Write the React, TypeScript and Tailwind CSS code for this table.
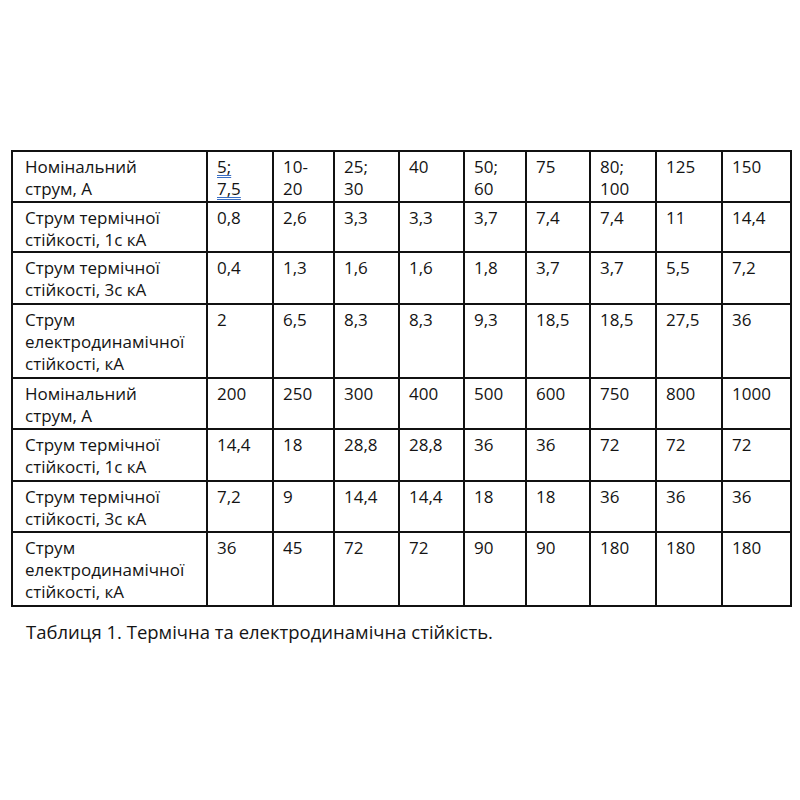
import React from 'react';

type Row = { label: string[]; values: string[][] };

const rows: Row[] = [
  { label: ['Номінальний', 'струм, А'], values: [['5;', '7,5'], ['10-', '20'], ['25;', '30'], ['40'], ['50;', '60'], ['75'], ['80;', '100'], ['125'], ['150']] },
  { label: ['Струм термічної', 'стійкості, 1с кА'], values: [['0,8'], ['2,6'], ['3,3'], ['3,3'], ['3,7'], ['7,4'], ['7,4'], ['11'], ['14,4']] },
  { label: ['Струм термічної', 'стійкості, 3с кА'], values: [['0,4'], ['1,3'], ['1,6'], ['1,6'], ['1,8'], ['3,7'], ['3,7'], ['5,5'], ['7,2']] },
  { label: ['Струм', 'електродинамічної', 'стійкості, кА'], values: [['2'], ['6,5'], ['8,3'], ['8,3'], ['9,3'], ['18,5'], ['18,5'], ['27,5'], ['36']] },
  { label: ['Номінальний', 'струм, А'], values: [['200'], ['250'], ['300'], ['400'], ['500'], ['600'], ['750'], ['800'], ['1000']] },
  { label: ['Струм термічної', 'стійкості, 1с кА'], values: [['14,4'], ['18'], ['28,8'], ['28,8'], ['36'], ['36'], ['72'], ['72'], ['72']] },
  { label: ['Струм термічної', 'стійкості, 3с кА'], values: [['7,2'], ['9'], ['14,4'], ['14,4'], ['18'], ['18'], ['36'], ['36'], ['36']] },
  { label: ['Струм', 'електродинамічної', 'стійкості, кА'], values: [['36'], ['45'], ['72'], ['72'], ['90'], ['90'], ['180'], ['180'], ['180']] },
];

const colWidths = [195, 66, 61, 65, 65, 62, 64, 66, 66, 69];
const rowHeights = [51, 50, 52, 74, 51, 52, 51, 74];

export default function App() {
  return (
    <div className="w-[800px] h-[800px] bg-white text-[#141414] pt-[150px] pl-[11px]" style={{ fontFamily: '"Open Sans", "Noto Sans", sans-serif' }}>
      <table className="table-fixed border-collapse w-[779px] text-[17px] leading-[22px]">
        <colgroup>
          {colWidths.map((w, i) => (
            <col key={i} style={{ width: w }} />
          ))}
        </colgroup>
        <tbody>
          {rows.map((r, ri) => (
            <tr key={ri} style={{ height: rowHeights[ri] }}>
              <td className="border-2 border-[#111] align-top pl-[12px] pt-[4px] whitespace-nowrap">
                {r.label.map((l, li) => (
                  <div key={li}>{l}</div>
                ))}
              </td>
              {r.values.map((v, vi) => (
                <td key={vi} className="border-2 border-[#111] align-top pl-[9px] pt-[4px] whitespace-nowrap">
                  {v.map((t, ti) =>
                    ri === 0 && vi === 0 ? (
                      <div key={ti}>
                        <span className="underline decoration-double decoration-[#3b6fc4] decoration-1 underline-offset-2">{t}</span>
                      </div>
                    ) : (
                      <div key={ti}>{t}</div>
                    )
                  )}
                </td>
              ))}
            </tr>
          ))}
        </tbody>
      </table>
      <p className="mt-[13px] pl-[15px] text-[18.5px] leading-[24px]">Таблиця 1. Термічна та електродинамічна стійкість.</p>
    </div>
  );
}
